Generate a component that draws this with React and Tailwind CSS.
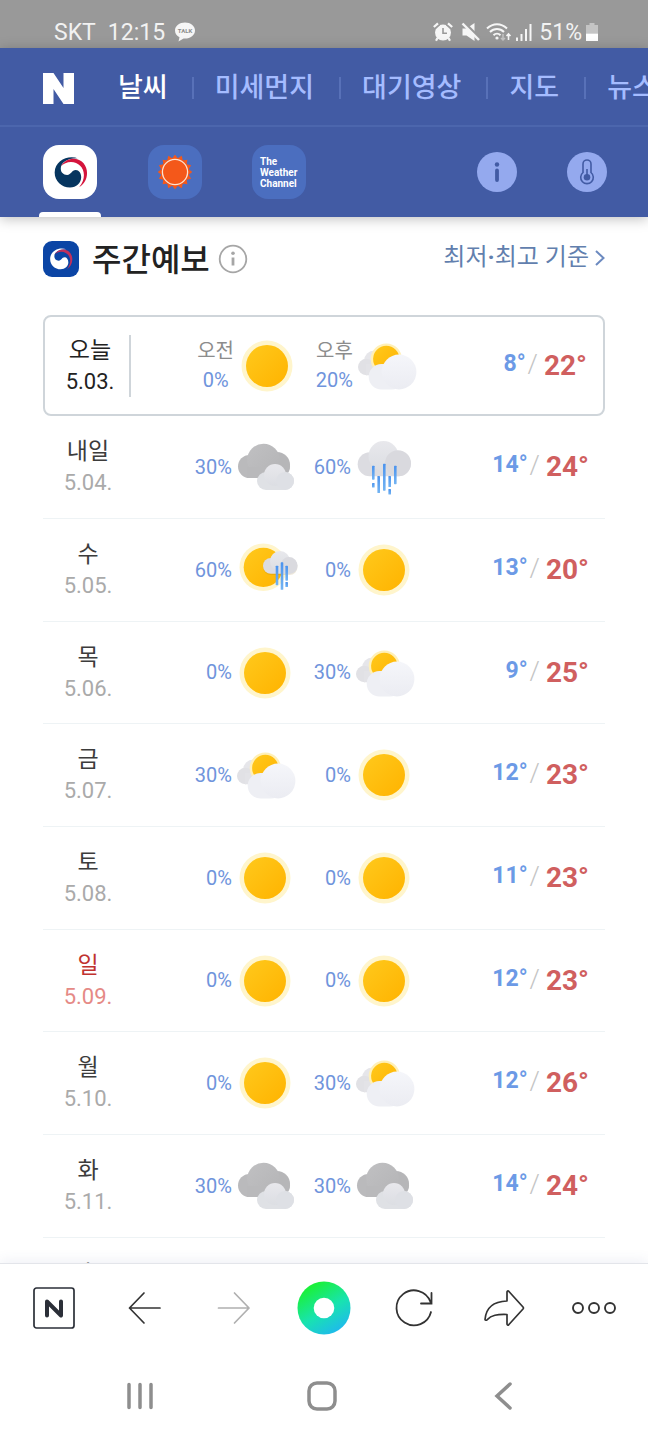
import React from "react";

const kr = "font-['Roboto','Noto_Sans_CJK_KR',sans-serif]";

function Defs() {
  return (
    <svg width="0" height="0" className="absolute" aria-hidden="true">
      <defs>
        <linearGradient id="sun" x1="0" y1="0" x2="1" y2="1">
          <stop offset="0" stopColor="#ffc91c" />
          <stop offset="1" stopColor="#ffb300" />
        </linearGradient>
        <linearGradient id="dark" x1="0" y1="0" x2="1" y2="1">
          <stop offset="0" stopColor="#c0c0c2" />
          <stop offset="1" stopColor="#b4b4b6" />
        </linearGradient>
        <linearGradient id="light" x1="0" y1="0" x2="0" y2="1">
          <stop offset="0" stopColor="#e8e8ec" />
          <stop offset="1" stopColor="#dcdee3" />
        </linearGradient>
        <linearGradient id="pale" x1="0" y1="0" x2="0" y2="1">
          <stop offset="0" stopColor="#f5f6fa" />
          <stop offset="1" stopColor="#ebecf2" />
        </linearGradient>
        <linearGradient id="drop" x1="0" y1="0" x2="0" y2="1">
          <stop offset="0" stopColor="#4b93ee" />
          <stop offset="1" stopColor="#74b4f2" />
        </linearGradient>
        <linearGradient id="dot" x1="0.2" y1="0" x2="0.8" y2="1">
          <stop offset="0.1" stopColor="#1bf03c" />
          <stop offset="0.55" stopColor="#18e3b0" />
          <stop offset="1" stopColor="#1fb4f5" />
        </linearGradient>
      </defs>
    </svg>
  );
}

function Drop({ x, y, h }) {
  return <rect x={x - 1.3} y={y} width="2.6" height={h} rx="0.6" fill="url(#drop)" />;
}

function WeatherIcon({ type }) {
  const names = { sun: "맑음", partly: "구름많음", cloudy: "흐림", rain: "비", sunrain: "가끔 비" };
  return (
    <svg viewBox="0 0 60 60" className="size-[60px] shrink-0 overflow-visible" role="img" aria-label={names[type]}>
      {type === "sun" && (
        <>
          <circle cx="30" cy="30" r="25.5" fill="#fff5cc" />
          <circle cx="30" cy="30" r="21" fill="url(#sun)" />
        </>
      )}
      {type === "partly" && (
        <>
          <circle cx="18.5" cy="25" r="10.5" fill="#e6e6ea" />
          <circle cx="10.3" cy="31" r="8.3" fill="#e1e1e5" />
          <rect x="10" y="28" width="16" height="11.3" fill="#e3e3e7" />
          <circle cx="30.3" cy="23" r="15.6" fill="#fff0b8" />
          <circle cx="30.3" cy="23" r="13.2" fill="url(#sun)" />
          <rect x="12.7" y="28" width="36" height="25.5" rx="12.7" fill="#eeeff4" />
          <circle cx="43" cy="36" r="17.4" fill="url(#pale)" />
        </>
      )}
      {type === "cloudy" && (
        <>
          <rect x="3" y="18" width="52" height="23" rx="11.5" fill="#bababc" />
          <circle cx="42" cy="28" r="13" fill="#b6b6b8" />
          <circle cx="28.5" cy="23" r="16.3" fill="url(#dark)" />
          <rect x="12" y="30" width="34" height="11" fill="#b9b9bb" />
          <rect x="22" y="35" width="37" height="18" rx="9" fill="#dfe1e5" />
          <circle cx="40" cy="38" r="11" fill="url(#light)" />
          <circle cx="50" cy="44" r="9" fill="#dee0e5" />
        </>
      )}
      {type === "rain" && (
        <>
          <rect x="3.7" y="15.300" width="53" height="24" rx="12" fill="#dcdce1" />
          <circle cx="29.5" cy="19" r="15" fill="url(#light)" />
          <circle cx="44" cy="26.3" r="13" fill="#d9d9de" />
          <Drop x={19.3} y={28.7} h={14} />
          <Drop x={19.3} y={46} h={4.5} />
          <Drop x={24.7} y={39} h={17} />
          <Drop x={30.3} y={26.7} h={27} />
          <Drop x={35.7} y={39} h={11} />
          <Drop x={35.7} y={52} h={5.5} />
          <Drop x={41.3} y={28.7} h={18.5} />
        </>
      )}
      {type === "sunrain" && (
        <>
          <circle cx="28.3" cy="27.3" r="23.8" fill="#fff5cc" />
          <circle cx="28.3" cy="27.3" r="19.6" fill="url(#sun)" />
          <rect x="28" y="19" width="34.5" height="16" rx="8" fill="#8a6200" opacity="0.15" />
          <rect x="28" y="18" width="34.5" height="15.7" rx="7.8" fill="#dcdce1" />
          <circle cx="45" cy="21" r="10" fill="url(#light)" />
          <circle cx="54" cy="25.4" r="8.3" fill="#dadadf" />
          <Drop x={42} y={25.7} h={19.5} />
          <Drop x={47} y={22.3} h={27.5} />
          <Drop x={51.7} y={25.7} h={15} />
          <Drop x={51.7} y={42} h={5} />
        </>
      )}
    </svg>
  );
}

function Emblem({ body, crescent, className }) {
  return (
    <svg viewBox="0 0 36 36" className={className} aria-hidden="true">
      <path
        d="M26 3.500C16-.5 2 5 1.700 18 1.700 27 9 33.500 17.500 33.500 24 33.500 29 29 29 23c0-4.500-2.500-7.500-5.500-7.500-4.500 0-4.500 5-9 5-4 0-6.500-2.500-6.500-6.500C8 8 15 3 26 3.500z"
        fill={body}
      />
      <path
        d="M8.300 11.500C11 6 17 3.500 22 3.800 30 4.300 35 11 35 18.500 35 25 32 30 27 33c3.500-4.500 4.800-8.500 4.800-12.500C31.800 13 26 7.300 18.500 7.300c-4 0-8 1.700-10.200 4.200z"
        fill={crescent}
      />
    </svg>
  );
}

function StatusBar() {
  return (
    <div className="flex h-12 shrink-0 items-end justify-between bg-[#999999] pb-px pl-[54px] pr-[50px] text-[23px] leading-[28px] text-[#f2f2f2]">
      <div className="flex items-center">
        <span>SKT</span>
        <span className="ml-3">12:15</span>
        <svg viewBox="0 0 20 20" className="mb-[2px] ml-[10px] size-5" aria-hidden="true">
          <path d="M10 0.500C4.500 0.500 0 4 0 8.500c0 3 1.800 5.400 4.500 6.800L3.500 19.500l5-3c.5.1 1 .1 1.500.1 5.500 0 10-3.600 10-8.100S15.500.5 10 .5z" fill="#f6f6f6" />
          <text x="10" y="10.800" textAnchor="middle" fontSize="6" fontWeight="700" fill="#8c8c8c" fontFamily="Roboto, sans-serif">TALK</text>
        </svg>
      </div>
      <div className="flex items-center">
        <svg viewBox="0 0 20 20" className="mb-[2px] size-5" aria-hidden="true">
          <circle cx="10" cy="10.500" r="8" fill="#f6f6f6" />
          <path d="M1 5.500 5.500 1.500M19 5.500 14.500 1.500" stroke="#999" strokeWidth="5" />
          <path d="M.8 5 5 1.300M19.200 5 15 1.300" stroke="#f6f6f6" strokeWidth="2.200" />
          <path d="M4.500 16 3 18.800M15.500 16l1.500 2.800" stroke="#f6f6f6" strokeWidth="2.200" />
          <path d="M10 6v5.200h4" stroke="#999" strokeWidth="1.600" fill="none" />
        </svg>
        <svg viewBox="0 0 20 20" className="mb-[2px] ml-2 size-5" aria-hidden="true">
          <path d="M1.500 6.500h4L13.500 1v18l-8-5.500h-4z" fill="#f6f6f6" />
          <path d="M2-.5 19.500 17" stroke="#999" strokeWidth="3" />
          <path d="M1.500 1.500 18 18" stroke="#f6f6f6" strokeWidth="2.400" />
        </svg>
        <svg viewBox="0 0 26 20" className="mb-[2px] ml-[5px] h-5 w-[26px]" fill="none" stroke="#f6f6f6" aria-hidden="true">
          <path d="M1 6.500C7 .8 15 .8 21 6.500M4 10c4-4 10-4 14 0M7.500 13.200c2-2 5-2 7 0" strokeWidth="2" />
          <circle cx="11" cy="16" r="1.600" fill="#f6f6f6" stroke="none" />
          <path d="M17 12v6m-2-2 2 2 2-2" stroke="#c4c4c4" strokeWidth="1.500" />
          <path d="M22.500 18v-6m-2 2 2-2 2 2" strokeWidth="1.600" />
        </svg>
        <svg viewBox="0 0 18 20" className="mb-[2px] ml-[3px] h-5 w-[18px]" stroke="#f6f6f6" strokeWidth="2" aria-hidden="true">
          <path d="M2 15.500V19M6.500 12v7M11 7v12M15.500 2v17" />
        </svg>
        <span className="ml-[6px]">51%</span>
        <svg viewBox="0 0 12 20" className="mb-[2px] ml-1 h-5 w-3" aria-hidden="true">
          <path d="M3.500 1h5v2H12v8.500H0V3h3.500z" fill="#c4c4c4" />
          <path d="M0 11.500h12V19H0z" fill="#fff" />
        </svg>
      </div>
    </div>
  );
}

function Header() {
  const menu = ["날씨", "미세먼지", "대기영상", "지도", "뉴스"];
  return (
    <header className="relative z-10 shrink-0 bg-[#425ba4] shadow-[0_2px_12px_rgba(0,0,0,0.25)]">
      <nav className="flex h-[79px] items-center overflow-hidden border-b-2 border-[#4c66ad] pl-[43px] pt-[3px]">
        <a href="#home" aria-label="NAVER" className="mr-[27px] shrink-0">
          <svg viewBox="0 0 31 31" className="size-[31px]" aria-hidden="true">
            <path d="M0 0h10.500l10 15V0H31v31H20.500l-10-15v15H0z" fill="#fff" />
          </svg>
        </a>
        <ul className="flex shrink-0 items-center text-[27px] font-medium leading-8">
          {menu.map((m, i) => (
            <li key={m} className="flex shrink-0 items-center">
              {i > 0 && <span className="h-[22px] w-[2px] bg-[#5871b8]" />}
              <a href="#menu" className={i === 0 ? "pl-[17px] pr-6 text-white" : "pl-[21px] pr-[25px] text-[#a5bcff]"}>{m}</a>
            </li>
          ))}
        </ul>
      </nav>
      <div className="flex h-[90px] items-start pl-[39px] pr-[41px]">
        <button aria-label="기상청" className="flex h-[90px] w-[62px] flex-col items-center justify-between pt-[18px]">
          <span className="flex size-[54px] items-center justify-center rounded-2xl bg-white">
            <Emblem body="#06355f" crescent="#d5143c" className="size-[35px]" />
          </span>
          <span className="h-[5px] w-full rounded-t-sm bg-white" />
        </button>
        <button aria-label="아큐웨더" className="ml-[47px] mt-[18px] flex size-[54px] items-center justify-center rounded-2xl bg-[#4b6ebf]">
          <svg viewBox="-17 -17 34 34" className="size-[34px]" aria-hidden="true">
            {Array.from({ length: 16 }, (_, i) => (
              <path key={i} d="M-4-12 0-17.500 4-12z" fill="#f4581a" transform={`rotate(${i * 22.5})`} />
            ))}
            <circle r="14" fill="#f4581a" />
            <circle r="12.600" fill="#f4581a" stroke="#fbe3d3" strokeWidth="1.300" />
          </svg>
        </button>
        <button className="ml-[50px] mt-[18px] flex size-[54px] flex-col items-start justify-center rounded-2xl bg-[#4b6ebf] pl-2 text-[10px] font-bold leading-[11px] text-white">
          <span>The</span>
          <span>Weather</span>
          <span>Channel</span>
        </button>
        <button aria-label="정보" className="ml-auto mt-[25px]">
          <svg viewBox="0 0 40 40" className="size-10" aria-hidden="true">
            <circle cx="20" cy="20" r="20" fill="#94a9ee" />
            <circle cx="20" cy="12.500" r="2.200" fill="#425ba4" />
            <path d="M20 18.500v9.500" stroke="#425ba4" strokeWidth="3.800" strokeLinecap="round" />
          </svg>
        </button>
        <button aria-label="온도" className="ml-[50px] mt-[25px]">
          <svg viewBox="0 0 40 40" className="size-10" fill="none" stroke="#425ba4" aria-hidden="true">
            <circle cx="20" cy="20" r="20" fill="#94a9ee" stroke="none" />
            <path d="M16 20.500V12a4 4 0 0 1 8 0v8.500a6.300 6.300 0 1 1-8 0z" strokeWidth="1.600" />
            <circle cx="20" cy="25.300" r="3.300" fill="#425ba4" stroke="none" />
            <path d="M20 17v8" strokeWidth="1.600" />
          </svg>
        </button>
      </div>
    </header>
  );
}

const days = [
  { day: "오늘", date: "5.03.", am: ["0%", "sun"], pm: ["20%", "partly"], low: 8, high: 22 },
  { day: "내일", date: "5.04.", am: ["30%", "cloudy"], pm: ["60%", "rain"], low: 14, high: 24 },
  { day: "수", date: "5.05.", am: ["60%", "sunrain"], pm: ["0%", "sun"], low: 13, high: 20 },
  { day: "목", date: "5.06.", am: ["0%", "sun"], pm: ["30%", "partly"], low: 9, high: 25 },
  { day: "금", date: "5.07.", am: ["30%", "partly"], pm: ["0%", "sun"], low: 12, high: 23 },
  { day: "토", date: "5.08.", am: ["0%", "sun"], pm: ["0%", "sun"], low: 11, high: 23 },
  { day: "일", date: "5.09.", am: ["0%", "sun"], pm: ["0%", "sun"], low: 12, high: 23, holiday: true },
  { day: "월", date: "5.10.", am: ["0%", "sun"], pm: ["30%", "partly"], low: 12, high: 26 },
  { day: "화", date: "5.11.", am: ["30%", "cloudy"], pm: ["30%", "cloudy"], low: 14, high: 24 },
  { day: "수", date: "5.12.", am: ["30%", "cloudy"], pm: ["30%", "cloudy"], low: 14, high: 24 },
];

function Half({ label, data }) {
  return (
    <div className="flex w-[119px] items-center justify-end gap-[3px]">
      <div className="text-center text-[20px] leading-[29px]">
        {label && <div className="text-[#8c8c8c]">{label}</div>}
        <div className="text-[#6f94dc]">{data[0]}</div>
      </div>
      <WeatherIcon type={data[1]} />
    </div>
  );
}

function DayRow({ d, today }) {
  const dayColor = today ? "text-[#222]" : d.holiday ? "text-[#c0322f]" : "text-[#3c3c3c]";
  const dateColor = today ? "text-[#222]" : d.holiday ? "text-[#e58a86]" : "text-[#aaaaaa]";
  return (
    <li
      className={
        today
          ? "flex h-[101px] items-center rounded-lg border-2 border-[#cfd5da] pr-4"
          : "flex h-[103px] items-center border-b border-[#eef3f5] pr-4 nth-[3n+1]:h-[102px]"
      }
    >
      <div className={today ? "mr-1 w-[86px] border-r-2 border-[#cfd5da] pl-[6px] text-center" : "w-[90px] text-center"}>
        <div className={`text-[23px] leading-[31px] ${dayColor}`}>{d.day}</div>
        <div className={`text-[22px] leading-[31px] ${dateColor}`}>{d.date}</div>
      </div>
      <div className="ml-[43px] flex">
        <Half label={today && "오전"} data={d.am} />
        <Half label={today && "오후"} data={d.pm} />
      </div>
      <div className="ml-auto flex items-start font-bold leading-7">
        <span className="text-[23px] text-[#6c9ae6]">{d.low}°</span>
        <span className="mx-[2px] text-[26px] font-light text-[#c4c4c4]">/</span>
        <span className="ml-1 text-[28px] leading-[32px] text-[#d05f5f]">{d.high}°</span>
      </div>
    </li>
  );
}

function Weekly() {
  return (
    <main className="min-h-0 flex-1 overflow-y-auto px-[43px] pt-[19px] [scrollbar-width:none]">
      <div className="flex h-[46px] items-center">
        <span className="flex size-9 items-center justify-center rounded-[9px] bg-[#0b45a5]">
          <Emblem body="#ffffff" crescent="#c2305c" className="size-6" />
        </span>
        <h1 className="ml-[13px] pt-[2px] text-[32px] font-medium leading-[46px] text-[#222]">주간예보</h1>
        <button aria-label="도움말" className="ml-2">
          <svg viewBox="0 0 30 30" className="size-[30px]" fill="none" stroke="#a6a6a6" aria-hidden="true">
            <circle cx="15" cy="15" r="13.300" strokeWidth="1.800" />
            <circle cx="15" cy="9.300" r="1.800" fill="#a6a6a6" stroke="none" />
            <path d="M15 13.500v8" strokeWidth="2.800" />
          </svg>
        </button>
        <a href="#basis" className="ml-auto flex items-center pb-1 text-[24px] leading-8 text-[#627fae]">
          <span>최저<b>·</b>최고 기준</span>
          <svg viewBox="0 0 10 18" className="ml-[6px] h-[18px] w-[10px]" fill="none" stroke="#6c8ac0" strokeWidth="2" aria-hidden="true">
            <path d="M1 3 8.500 10 1 17" />
          </svg>
        </a>
      </div>
      <ul className="mt-[33px]">
        {days.map((d, i) => (
          <DayRow key={d.date} d={d} today={i === 0} />
        ))}
      </ul>
    </main>
  );
}

function BottomBar() {
  const line = "size-[46px]";
  return (
    <footer className="relative z-10 shrink-0 border-t border-[#e3e5ea] bg-white shadow-[0_-3px_12px_rgba(60,80,140,0.08)]">
      <nav className="grid h-[88px] grid-cols-7 items-center justify-items-center px-[9px]">
        <button aria-label="홈">
          <svg viewBox="0 0 46 46" className={line} fill="none" stroke="#2b2f38" aria-hidden="true">
            <rect x="3" y="3" width="40" height="40" rx="2.500" strokeWidth="1.700" />
            <path d="M16 30.500V16.500l14 14v-14" strokeWidth="4" strokeLinecap="round" strokeLinejoin="round" />
          </svg>
        </button>
        <button aria-label="뒤로">
          <svg viewBox="0 0 46 46" className={line} fill="none" stroke="#333" strokeWidth="1.700" strokeLinecap="round" strokeLinejoin="round" aria-hidden="true">
            <path d="M39 23H8.500M23 8 8.500 23 23 38" />
          </svg>
        </button>
        <button aria-label="앞으로">
          <svg viewBox="0 0 46 46" className={line} fill="none" stroke="#b0b0b0" strokeWidth="1.700" strokeLinecap="round" strokeLinejoin="round" aria-hidden="true">
            <path d="M7.500 23H38M23.500 8 38 23 23.500 38" />
          </svg>
        </button>
        <button aria-label="그린닷">
          <svg viewBox="0 0 54 54" className="size-[54px]" aria-hidden="true">
            <circle cx="27" cy="27" r="26.500" fill="url(#dot)" />
            <circle cx="27" cy="27" r="10.300" fill="#fff" />
          </svg>
        </button>
        <button aria-label="새로고침">
          <svg viewBox="0 0 46 46" className={line} fill="none" stroke="#333" strokeWidth="1.800" strokeLinecap="round" aria-hidden="true">
            <path d="M40 27A17.500 17.500 0 1 1 39.500 17M40.500 8v10.500H30" />
          </svg>
        </button>
        <button aria-label="공유">
          <svg viewBox="0 0 46 46" className={line} fill="none" stroke="#333" strokeWidth="1.700" strokeLinejoin="round" aria-hidden="true">
            <path d="M4 34.500C5 22 13 16.500 26 16V7c0-1 1-1.500 1.700-.8L42 22c.6.7.6 1.300 0 2L27.700 39.800c-.7.700-1.700.2-1.700-.8v-9.500c-10-.3-15.500.5-20 5.300-.8.700-2 .6-2-.3z" />
          </svg>
        </button>
        <button aria-label="더보기">
          <svg viewBox="0 0 46 46" className={line} fill="none" stroke="#333" strokeWidth="1.900" aria-hidden="true">
            <circle cx="7" cy="23" r="5" />
            <circle cx="23" cy="23" r="5" />
            <circle cx="39" cy="23" r="5" />
          </svg>
        </button>
      </nav>
      <nav className="flex h-[88px] items-center justify-center gap-[150px] pr-[5px]">
        <button aria-label="최근 앱">
          <svg viewBox="0 0 32 32" className="size-8" stroke="#8e8e8e" strokeWidth="3.500" strokeLinecap="round" aria-hidden="true">
            <path d="M5 4.500v23M16 4.500v23M27 4.500v23" />
          </svg>
        </button>
        <button aria-label="홈 화면">
          <svg viewBox="0 0 32 32" className="size-8" fill="none" stroke="#8e8e8e" strokeWidth="3.500" aria-hidden="true">
            <rect x="3" y="3" width="26" height="26" rx="8" />
          </svg>
        </button>
        <button aria-label="이전">
          <svg viewBox="0 0 32 32" className="size-8" fill="none" stroke="#8e8e8e" strokeWidth="3.500" strokeLinecap="round" aria-hidden="true">
            <path d="M22 4 9 16l13 12" />
          </svg>
        </button>
      </nav>
    </footer>
  );
}

export default function App() {
  return (
    <div className={`flex h-screen flex-col overflow-hidden bg-white ${kr}`}>
      <Defs />
      <StatusBar />
      <Header />
      <Weekly />
      <BottomBar />
    </div>
  );
}
